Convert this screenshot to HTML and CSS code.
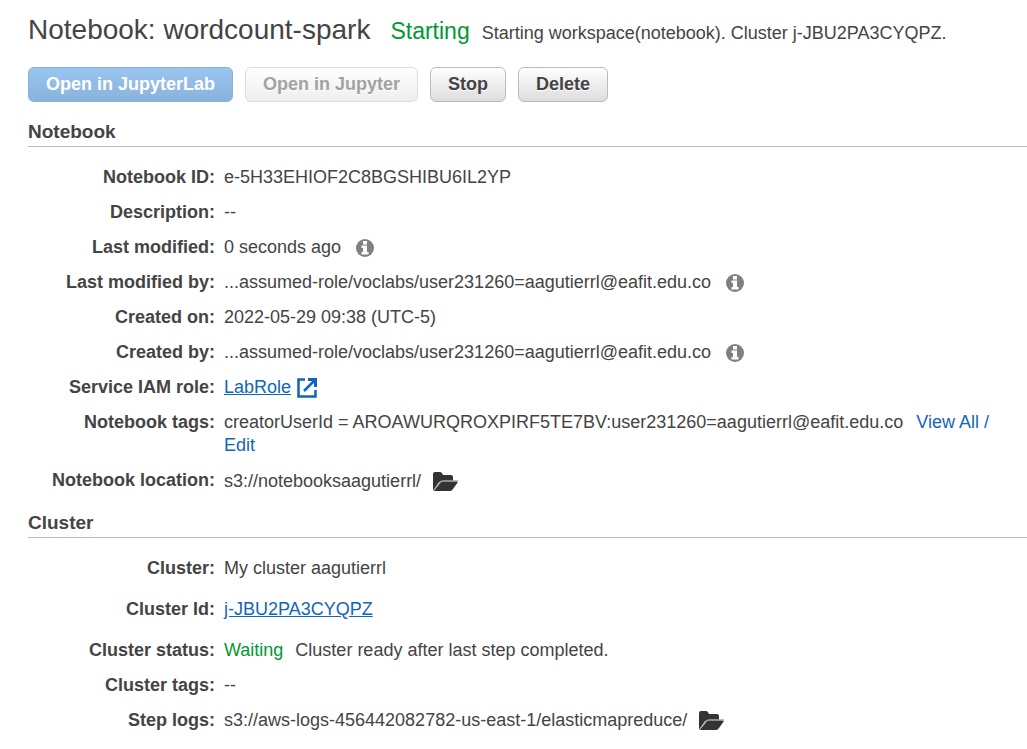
FILE: index.html
```html
<!DOCTYPE html>
<html lang="en">
<head>
<meta charset="utf-8">
<title>Notebook: wordcount-spark</title>
<link rel="stylesheet" href="styles.css">
</head>
<body>
<svg class="sprite" aria-hidden="true">
  <symbol id="info" viewBox="0 0 18 18">
    <circle cx="9" cy="9" r="9" fill="#808080"/>
    <path fill="#fff" d="M7 2h4v3.500H7zM5.500 6.500H11v6.500h1.500v2.500h-7V13H7V9H5.500z"/>
  </symbol>
  <symbol id="folder" viewBox="0 0 25 19">
    <path fill="#333" d="M0 19V2Q0 0 2 0h5q2 0 3 3h8q2 0 2 2v5H6z"/>
    <path fill="#333" stroke="#aaa" stroke-width="1.500" d="M1 18.500L7 10.500q1-1.500 3-1.500h15"/>
    <path fill="#333" d="M1 19l6-7q1-2 3-2h15l-5 7q-1 2-3 2z"/>
  </symbol>
  <symbol id="external" viewBox="0 0 20 20">
    <path fill="none" stroke="#1166bb" stroke-width="2.500" d="M8 1.500H1.500v17h17V12"/>
    <path fill="none" stroke="#1166bb" stroke-width="2.500" d="M7 13L17 3"/>
    <path fill="#1166bb" d="M11 0h9v9h-3V3h-6z"/>
  </symbol>
</svg>
<main class="page">
  <header class="title-bar">
    <h1 class="title">Notebook: wordcount-spark</h1>
    <span class="state">Starting</span>
    <span>Starting workspace(notebook). Cluster j-JBU2PA3CYQPZ.</span>
  </header>
  <div class="actions">
    <button class="button button-primary" type="button" disabled>Open in JupyterLab</button>
    <button class="button button-muted" type="button" disabled>Open in Jupyter</button>
    <button class="button" type="button">Stop</button>
    <button class="button" type="button">Delete</button>
  </div>
  <section class="section">
    <h2 class="section-title">Notebook</h2>
    <dl class="details">
      <dt>Notebook ID:</dt><dd>e-5H33EHIOF2C8BGSHIBU6IL2YP</dd>
      <dt>Description:</dt><dd>--</dd>
      <dt>Last modified:</dt><dd class="with-icon">0 seconds ago <svg class="info"><use href="#info"/></svg></dd>
      <dt>Last modified by:</dt><dd class="with-icon">...assumed-role/voclabs/user231260=aagutierrl@eafit.edu.co <svg class="info"><use href="#info"/></svg></dd>
      <dt>Created on:</dt><dd>2022-05-29 09:38 (UTC-5)</dd>
      <dt>Created by:</dt><dd class="with-icon">...assumed-role/voclabs/user231260=aagutierrl@eafit.edu.co <svg class="info"><use href="#info"/></svg></dd>
      <dt>Service IAM role:</dt><dd class="with-icon"><a class="link underlined" href="#role">LabRole</a><svg class="external"><use href="#external"/></svg></dd>
      <dt>Notebook tags:</dt><dd>creatorUserId = AROAWURQROXPIRF5TE7BV:user231260=aagutierrl@eafit.edu.co <a class="link tags-link" href="#tags">View All /</a> <a class="link" href="#edit">Edit</a></dd>
      <dt>Notebook location:</dt><dd class="with-icon location">s3://notebooksaagutierrl/ <svg class="folder"><use href="#folder"/></svg></dd>
    </dl>
  </section>
  <section class="section">
    <h2 class="section-title">Cluster</h2>
    <dl class="details">
      <dt>Cluster:</dt><dd>My cluster aagutierrl</dd>
      <dt class="roomy">Cluster Id:</dt><dd class="roomy"><a class="link underlined" href="#cluster">j-JBU2PA3CYQPZ</a></dd>
      <dt>Cluster status:</dt><dd><span class="waiting">Waiting</span>Cluster ready after last step completed.</dd>
      <dt>Cluster tags:</dt><dd>--</dd>
      <dt>Step logs:</dt><dd class="with-icon">s3://aws-logs-456442082782-us-east-1/elasticmapreduce/ <svg class="folder"><use href="#folder"/></svg></dd>
    </dl>
  </section>
</main>
</body>
</html>
```
FILE: styles.css
```css
body {
  margin: 0;
  background: #fff;
  color: #444;
  font: 18px/23px "Liberation Sans", Arial, sans-serif;
}
.sprite { position: absolute; width: 0; height: 0; }
.page { padding: 12px 0 0 28px; }
.title-bar { display: flex; align-items: baseline; gap: 12px; }
.title { margin: 0 8px 0 0; font-size: 28px; line-height: 36px; font-weight: 400; }
.state { color: #093; font-size: 23px; }
.waiting { margin-right: 12px; color: #093; }
.actions { display: flex; gap: 12px; margin-top: 19px; }
.button {
  padding: 5px 17px;
  border: 1px solid #bbb;
  border-radius: 6px;
  background: linear-gradient(#fff, #ddd);
  color: #444;
  font: bold 18px/23px "Liberation Sans", Arial, sans-serif;
  text-shadow: 0 1px 0 #fff;
}
.button-primary {
  border-color: #85b1dc;
  background: linear-gradient(#99c5f0, #8ab2dc);
  color: #fff;
  text-shadow: none;
}
.button-muted {
  border-color: #ddd;
  background: linear-gradient(#fff, #eee);
  color: #a2a2a2;
}
.section { margin-top: 18px; }
.section-title {
  margin: 0 0 19px;
  padding-bottom: 3px;
  border-bottom: 1px solid #bbb;
  font-size: 19px;
  line-height: 23px;
}
.details {
  display: grid;
  grid-template-columns: 187px 1fr;
  gap: 12px 9px;
  margin: 0;
  padding-right: 30px;
}
.details dt { font-weight: bold; text-align: right; }
.details dd { margin: 0; }
.details .roomy { padding: 6px 0; }
.with-icon { display: flex; align-items: center; }
.location { min-height: 24px; }
.link { color: #16b; text-decoration: none; }
.underlined { text-decoration: underline; }
.tags-link { margin-left: 8px; }
.info { width: 18px; height: 18px; margin-left: 15px; }
.external { width: 20px; height: 20px; margin-left: 6px; }
.folder { width: 25px; height: 19px; margin-left: 12px; }
```
